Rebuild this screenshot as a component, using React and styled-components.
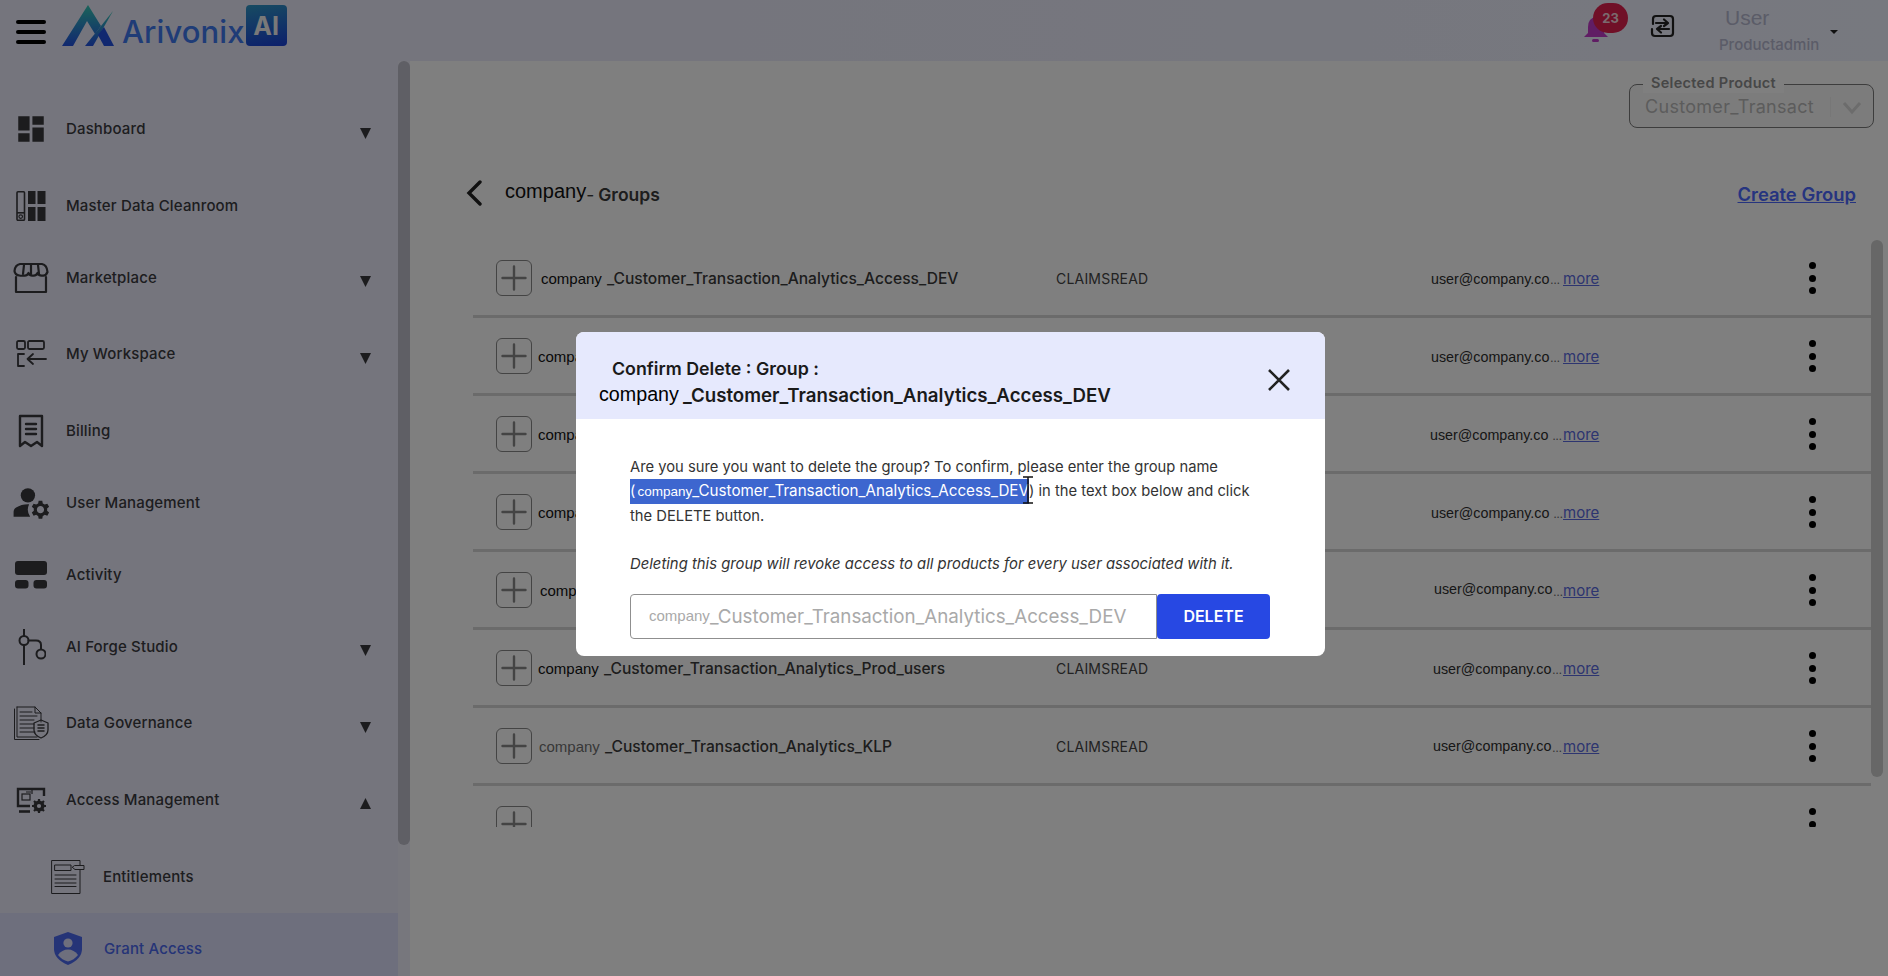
import React from 'react';
import styled, { createGlobalStyle } from 'styled-components';
import { MdDashboard, MdManageAccounts } from 'react-icons/md';

const GlobalStyle = createGlobalStyle`
  html, body { margin: 0; padding: 0; height: 100%; overflow: hidden; }
  body { font-family: "Inter", "Liberation Sans", sans-serif; background: #fff; }
  * { box-sizing: border-box; }
`;

const Page = styled.div`
  width: 1888px;
  height: 976px;
  display: flex;
  flex-direction: column;
  position: relative;
  overflow: hidden;
`;

/* header */
const Header = styled.header`
  height: 61px;
  flex: none;
  display: flex;
  align-items: flex-start;
  background: linear-gradient(90deg, #eaeafa 0%, #eaeafa 30%, #eff2ff 100%);
`;
const Burger = styled.div`
  width: 30px;
  margin: 20px 0 0 16px;
  display: flex;
  flex-direction: column;
  gap: 6.5px;
  span { display: block; height: 3.5px; border-radius: 2px; background: #000; }
`;
const LogoWrap = styled.div`
  display: flex;
  align-items: flex-start;
  margin: 5px 0 0 16px;
`;
const LogoWord = styled.span`
  font-size: 31px;
  font-weight: 500;
  line-height: 40px;
  margin: 7px 1px 0 6px;
  color: #3f78ee;
  letter-spacing: 0.1px;
`;
const LogoBadge = styled.span`
  width: 41px;
  height: 41px;
  border-radius: 4px;
  background: linear-gradient(170deg, #2f97c4 0%, #1a3fd8 100%);
  color: #f2f2f2;
  font-size: 25px;
  font-weight: 700;
  display: flex;
  align-items: center;
  justify-content: center;
`;
const HeaderRight = styled.div`
  margin-left: auto;
  display: flex;
  align-items: flex-start;
`;
const BellWrap = styled.div`
  position: relative;
  width: 60px;
  height: 61px;
  margin-right: 3px;
`;
const BellIcon = styled.svg`
  margin: 15px 0 0 -2px;
  width: 24px;
  height: 28px;
  fill: #c03ac8;
`;
const Badge = styled.span`
  position: absolute;
  left: 7px;
  top: 3px;
  width: 35px;
  height: 30px;
  border-radius: 15px;
  background: #e0204f;
  color: #f5d5dc;
  font-size: 13px;
  font-weight: 700;
  display: flex;
  align-items: center;
  justify-content: center;
`;
const SwapIcon = styled.svg`
  margin-top: 14px;
  width: 26px;
  height: 26px;
`;
const UserBox = styled.div`
  width: 104px;
  margin-left: 44px;
  color: #b6b8d0;
`;
const UserName = styled.div`
  font-family: "Liberation Sans", sans-serif;
  font-size: 21px;
  line-height: 24px;
  margin: 6px 0 0 6px;
`;
const UserRole = styled.div`
  font-size: 15px;
  font-weight: 500;
  line-height: 20px;
  margin-top: 5px;
`;
const Caret = styled.span`
  width: 0;
  height: 0;
  margin: 30px 50px 0 7px;
  border-left: 4px solid transparent;
  border-right: 4px solid transparent;
  border-top: 4px solid #222;
`;

/* layout */
const Body = styled.div`
  flex: 1;
  display: flex;
  min-height: 0;
`;
const Sidebar = styled.aside`
  width: 410px;
  flex: none;
  display: flex;
  background: #eeeefa;
`;
const Nav = styled.nav`
  width: 398px;
  padding-top: 32px;
  background: #eaeafa;
  overflow: hidden;
`;
const SideTrack = styled.div`
  width: 12px;
  background: #eeeefa;
`;
const Thumb = styled.div`
  width: 12px;
  height: ${(p) => p.$h}px;
  margin-top: ${(p) => p.$top || 0}px;
  border-radius: 6px;
  background: ${(p) => p.$color};
`;
const NavItem = styled.div`
  height: ${(p) => (p.$arrow ? 76.6 : 72)}px;
`;
const NavRow = styled.div`
  height: 72px;
  display: flex;
  align-items: center;
  padding-left: ${(p) => (p.$sub ? 37 : 0)}px;
  background: ${(p) => (p.$active ? '#dcdefa' : 'transparent')};
`;
const IconBox = styled.span`
  width: 62px;
  flex: none;
  display: flex;
  align-items: center;
  justify-content: center;
  color: #38383c;
`;
const NavLabel = styled.span`
  margin-left: ${(p) => (p.$sub ? (p.$active ? 5 : 4) : 4)}px;
  margin-top: -1px;
  font-size: 15px;
  font-weight: 500;
  letter-spacing: 0.15px;
  color: ${(p) => (p.$active ? '#4a68ee' : '#3b3b40')};
`;
const Arrow = styled.svg`
  margin-left: auto;
  margin-right: 27px;
  margin-top: 8px;
  width: 11px;
  height: 11px;
  fill: #38383c;
`;

/* main */
const Main = styled.main`
  flex: 1;
  min-width: 0;
  background: #fff;
  padding-top: 23px;
`;
const SelectRow = styled.div`
  display: flex;
  justify-content: flex-end;
  padding-right: 14px;
`;
const SelectField = styled.div`
  position: relative;
  width: 245px;
  height: 44px;
  border: 1px solid #7a7a7a;
  border-radius: 8px;
  display: flex;
  align-items: center;
  padding-left: 15px;
  background: #f8f8f8;
  color: #b8b8b8;
  font-size: 18px;
  letter-spacing: 0.3px;
`;
const Legend = styled.span`
  position: absolute;
  left: 13px;
  top: -12px;
  padding: 0 8px;
  background: #fff;
  color: #8e8e8e;
  font-size: 14.5px;
  line-height: 20px;
  font-weight: 600;
  letter-spacing: 0.3px;
`;
const SelectDivider = styled.span`
  position: absolute;
  right: 42px;
  top: 12px;
  width: 1px;
  height: 20px;
  background: #efefef;
`;
const SelectChevron = styled.svg`
  position: absolute;
  right: 11px;
  top: 15px;
  width: 20px;
  height: 16px;
`;
const TitleRow = styled.div`
  height: 48px;
  margin-top: 41px;
  display: flex;
  align-items: center;
  padding: 0 32px 0 56px;
`;
const BackIcon = styled.svg`
  width: 17px;
  height: 26px;
`;
const TitleText = styled.div`
  margin-left: 22px;
  margin-top: 2px;
  display: flex;
  align-items: baseline;
  font-size: 17.5px;
  font-weight: 600;
  color: #3a3a3a;
`;
const TitleDash = styled.span`
  font-weight: 400;
  margin-right: 4px;
`;
const Redacted = styled.span`
  font-family: "Liberation Sans", sans-serif;
  font-weight: 400;
  font-size: ${(p) => p.$size || 15}px;
  color: ${(p) => p.$color || '#111'};
  margin-right: ${(p) => p.$gap || 0}px;
  position: relative;
  top: ${(p) => p.$lift || 0}px;
`;
const CreateLink = styled.a`
  margin-left: auto;
  margin-top: 2px;
  color: #4c68ff;
  font-size: 18.4px;
  font-weight: 600;
  text-decoration: underline;
`;
const ListWrap = styled.div`
  margin: 23px 5px 0 63px;
  display: flex;
  align-items: flex-start;
`;
const List = styled.div`
  width: 1398px;
  height: 587px;
  overflow: hidden;
`;
const Row = styled.div`
  height: 78px;
  border-bottom: 3px solid #d6d6d6;
  display: grid;
  grid-template-columns: 45px 515px 375px 378px 40px;
  align-items: center;
  padding-left: 23px;
  padding-top: 1px;
`;
const PlusBox = styled.span`
  width: 36px;
  height: 36px;
  border: 1px solid #888;
  border-radius: 6px;
  display: flex;
  align-items: center;
  justify-content: center;
`;
const NameCell = styled.div`
  margin-left: ${(p) => p.$shift || 0}px;
  font-size: 15.6px;
  font-weight: 500;
  color: #3a3a3a;
  white-space: nowrap;
`;
const ClaimCell = styled.div`
  font-size: 14px;
  letter-spacing: 0.2px;
  color: #444;
`;
const EmailCell = styled.div`
  display: grid;
  grid-template-columns: 132px auto;
  align-items: baseline;
  white-space: nowrap;
`;
const EmailText = styled.span`
  font-family: "Liberation Sans", sans-serif;
  font-size: 14.3px;
  color: #2e2e2e;
  margin-left: ${(p) => p.$shift || 0}px;
  position: relative;
  top: ${(p) => p.$lift || 0}px;
`;
const Dots = styled.span`
  font-size: 11px;
  color: #666;
  margin-left: 1px;
`;
const More = styled.a`
  font-size: 15px;
  color: #5a6ae0;
  text-decoration: underline;
`;
const Kebab = styled.div`
  display: flex;
  flex-direction: column;
  gap: 5.5px;
  width: 7px;
  span { width: 7px; height: 7px; border-radius: 50%; background: #000; }
`;
const MainTrack = styled.div`
  width: 12px;
`;

/* modal */
const Scrim = styled.div`
  position: absolute;
  inset: 0;
  background: rgba(0, 0, 0, 0.5);
  display: flex;
  align-items: flex-start;
  justify-content: flex-start;
  padding: 332px 0 0 576px;
`;
const Modal = styled.div`
  width: 749px;
  height: 324px;
  background: #fff;
  border-radius: 8px;
  overflow: hidden;
`;
const ModalHead = styled.div`
  height: 87px;
  background: #e6e9fd;
  display: flex;
  align-items: center;
  justify-content: space-between;
  padding: 12px 34px 0 23px;
`;
const ModalTitle = styled.div`
  font-size: 17.8px;
  font-weight: 600;
  line-height: 27px;
  color: #1a1a1a;
`;
const TitleFirst = styled.div`
  margin-left: 13px;
`;
const TitleSecond = styled.div`
  font-size: 18.7px;
  white-space: nowrap;
`;
const CloseIcon = styled.svg`
  width: 24px;
  height: 24px;
  margin-top: -4px;
`;
const ModalBody = styled.div`
  padding: 36px 55px 0 54px;
`;
const Message = styled.p`
  margin: 0;
  font-size: 14.75px;
  line-height: 24px;
  color: #333;
`;
const Warning = styled(Message)`
  margin-top: 24px;
  font-size: 14.85px;
  font-style: italic;
`;
const Selected = styled.span`
  position: relative;
  display: inline-block;
  background: #3d66cf;
  color: #fff;
  white-space: nowrap;
`;
const SelectedName = styled.span`
  font-size: 15.2px;
  margin-left: 2px;
`;
const IBeam = styled.svg`
  position: absolute;
  right: -5px;
  top: -3px;
  width: 12px;
  height: 28px;
`;
const ConfirmRow = styled.div`
  display: flex;
  margin-top: 18px;
`;
const FakeInput = styled.div`
  width: 527px;
  height: 45px;
  border: 1px solid #8f8f8f;
  border-radius: 4px 0 0 4px;
  display: flex;
  align-items: center;
  padding: 0 0 1px 18px;
  white-space: nowrap;
  font-size: 18.8px;
  color: #a9a9a9;
`;
const DeleteButton = styled.button`
  width: 113px;
  height: 45px;
  border: none;
  border-radius: 4px;
  background: #2748e3;
  color: #fff;
  font-family: inherit;
  font-size: 16px;
  font-weight: 600;
  padding-bottom: 3px;
`;

/* icons */
const LogoMark = () => (
  <svg width="54" height="42" viewBox="0 0 54 42">
    <defs>
      <linearGradient id="logoG" x1="0" y1="0" x2="0" y2="1">
        <stop offset="0" stopColor="#35c8b4" />
        <stop offset="1" stopColor="#2250e0" />
      </linearGradient>
    </defs>
    <path d="M0 41 L26 0 L39 21 L33 29 L25 16 L11 41 Z" fill="url(#logoG)" />
    <path d="M23 41 L51 6 L31 41 Z" fill="url(#logoG)" />
    <path d="M36 30 L42 22 L52 41 L42 41 Z" fill="#2250e0" />
  </svg>
);

const Stroke = ({ w = 30, h = 30, vb = '0 0 30 30', sw = 1.8, children }) => (
  <svg width={w} height={h} viewBox={vb} fill="none" stroke="currentColor" strokeWidth={sw} strokeLinecap="round" strokeLinejoin="round">
    {children}
  </svg>
);

const MasterIcon = () => (
  <svg width="30" height="30" viewBox="0 0 30 30" fill="currentColor">
    <rect x="1" y="0.8" width="7.5" height="28.5" rx="1" fill="none" stroke="currentColor" strokeWidth="1.6" />
    <rect x="1" y="21" width="7.5" height="1.6" />
    <circle cx="4.7" cy="25.6" r="1.8" fill="none" stroke="currentColor" strokeWidth="1.2" />
    <rect x="12" y="0" width="7.5" height="13" />
    <rect x="21.5" y="0" width="8" height="13" />
    <rect x="12" y="16" width="7.5" height="14" />
    <rect x="21.5" y="16" width="8" height="14" />
  </svg>
);

const StoreIcon = () => (
  <Stroke w={36} h={32} vb="0 0 36 32" sw={2.2}>
    <path d="M3 15 V30 H33 V15" />
    <path d="M7 2 H29 Q34 3 34.5 10 Q33 14 29.5 13.5 Q26 14 24.5 11 Q23 14 20 13.5 Q17 14 15.5 11 Q14 14 11 13.5 Q8 14 6.5 13.5 Q2 13 1.5 9 Q2 3 7 2 Z" />
    <path d="M11 3 L10 12 M18 3 V12 M25 3 L26 12" />
  </Stroke>
);

const WorkspaceIcon = () => (
  <Stroke w={32} h={28} vb="0 0 32 28" sw={1.8}>
    <rect x="2" y="1" width="8" height="8" rx="1.5" />
    <rect x="13" y="1" width="16" height="8" rx="1.5" />
    <path d="M9 14 H3 V26 H9" />
    <path d="M31 19 H13 M18 14 L12.5 19 L18 24" />
  </Stroke>
);

const BillingIcon = () => (
  <Stroke w={26} h={34} vb="0 0 26 34" sw={2.4}>
    <path d="M2 2 H24 V32 L19 28 L13 32 L7 28 L2 32 Z" />
    <path d="M8 10 H18 M8 15 H18 M8 20 H18" />
  </Stroke>
);

const ActivityIcon = () => (
  <svg width="32" height="28" viewBox="0 0 32 28" fill="currentColor">
    <rect x="0" y="0" width="32" height="14" rx="3" />
    <rect x="0" y="19" width="13.5" height="8.5" rx="3" />
    <rect x="18.5" y="19" width="13.5" height="8.5" rx="3" />
  </svg>
);

const ForgeIcon = () => (
  <Stroke w={30} h={36} vb="0 0 30 36" sw={2}>
    <path d="M8 0 V7 M8 16 V36" />
    <circle cx="8" cy="11.5" r="4.5" />
    <path d="M12.5 11.5 H20 Q25 11.5 25 16 V20" />
    <circle cx="25" cy="25" r="4.5" />
  </Stroke>
);

const GovernanceIcon = () => (
  <Stroke w={36} h={36} vb="0 0 36 36" sw={1}>
    <path d="M4 2 H22 L28 8 V17 M4 2 V32 H24" />
    <path d="M1.5 4 V34.5 H26" />
    <path d="M22 2 V8 H28" />
    <path d="M7 7 H19 M7 11 H24 M7 15 H21 M7 19 H21 M7 23 H21 M7 27 H22" />
    <path d="M28 15 L35 18 V25 Q35 30 28 33 Q21 30 21 25 V18 Z" strokeWidth="1.3" />
    <path d="M25 20 H31 M25 23 H31 M25 26 H31" strokeWidth="1.5" />
  </Stroke>
);

const AccessIcon = () => (
  <svg width="30" height="26" viewBox="0 0 30 26" fill="none" stroke="currentColor">
    <path d="M28 9 V2 H2 V19 H14" strokeWidth="2.4" />
    <rect x="6" y="7" width="8" height="6" strokeWidth="1.2" />
    <path d="M10 5 H15 M16 3 V7" strokeWidth="1.2" />
    <path d="M3 24.5 H14" strokeWidth="2.6" />
    <circle cx="23" cy="19" r="3.8" strokeWidth="3.4" />
    <path d="M23 12 V14 M23 24 V26 M16 19 H18 M28 19 H30 M18 14 L19.5 15.5 M28 14 L26.5 15.5 M18 24 L19.5 22.5 M28 24 L26.5 22.5" strokeWidth="2.2" />
  </svg>
);

const EntitlementsIcon = () => (
  <Stroke w={34} h={34} vb="0 0 34 34" sw={1}>
    <path d="M1 0.5 H29 V33.5 H1 Z" />
    <rect x="4" y="5" width="16" height="5.5" />
    <path d="M24 5.5 H33 V9.5 H24 L21.5 7.5 Z" fill="#eaeafa" />
    <path d="M4 15 H25 M4 19 H25 M4 23 H25 M4 26.5 H25" />
  </Stroke>
);

const GrantIcon = () => (
  <svg width="28" height="33" viewBox="0 0 28 33">
    <path d="M14 0 L28 5 V17 Q28 27 14 33 Q0 27 0 17 V5 Z" fill="#4a68ee" />
    <circle cx="14" cy="11" r="4.6" fill="#dcdefa" />
    <path d="M4 23 Q8 17.5 14 17.5 Q20 17.5 24 23 Q20 28 14 29.5 Q8 28 4 23 Z" fill="#dcdefa" />
  </svg>
);

const PlusIcon = () => (
  <svg width="26" height="26" viewBox="0 0 26 26" stroke="#888" strokeWidth="2.4" strokeLinecap="round">
    <path d="M13 1.5 V24.5 M1.5 13 H24.5" />
  </svg>
);

const navItems = [
  { label: 'Dashboard', icon: <MdDashboard size={34} />, arrow: 'down' },
  { label: 'Master Data Cleanroom', icon: <MasterIcon /> },
  { label: 'Marketplace', icon: <StoreIcon />, arrow: 'down' },
  { label: 'My Workspace', icon: <WorkspaceIcon />, arrow: 'down' },
  { label: 'Billing', icon: <BillingIcon /> },
  { label: 'User Management', icon: <MdManageAccounts size={43} /> },
  { label: 'Activity', icon: <ActivityIcon /> },
  { label: 'AI Forge Studio', icon: <ForgeIcon />, arrow: 'down' },
  { label: 'Data Governance', icon: <GovernanceIcon />, arrow: 'down' },
  { label: 'Access Management', icon: <AccessIcon />, arrow: 'up' },
  { label: 'Entitlements', icon: <EntitlementsIcon />, sub: true },
  { label: 'Grant Access', icon: <GrantIcon />, sub: true, active: true },
];

const groups = [
  { name: '_Customer_Transaction_Analytics_Access_DEV', shift: 0, emailShift: 0 },
  { name: '_Customer_Transaction_Analytics_Access_QA', shift: -3, emailShift: 0 },
  { name: '_Customer_Transaction_Analytics_Access_UAT', shift: -3, emailShift: -1, gap: true },
  { name: '_Customer_Transaction_Analytics_Users_DEV', shift: -3, emailShift: 0, gap: true },
  { name: '_Customer_Transaction_Analytics_Users_QA', shift: -1, emailShift: 3, lift: -2 },
  { name: '_Customer_Transaction_Analytics_Prod_users', shift: -3, emailShift: 2 },
  { name: '_Customer_Transaction_Analytics_KLP', shift: -2, emailShift: 2, tint: '#707070', lift: -1 },
];

const GroupRow = ({ group }) => (
  <Row>
    <PlusBox><PlusIcon /></PlusBox>
    <NameCell $shift={group.shift}>
      <Redacted $color={group.tint} $gap={5}>company</Redacted>{group.name}
    </NameCell>
    <ClaimCell>CLAIMSREAD</ClaimCell>
    <EmailCell>
      <span>
        <EmailText $shift={group.emailShift} $lift={group.lift}>user@company.co</EmailText>
        <Dots>{group.gap ? '\u00a0' : ''}...</Dots>
      </span>
      <More>more</More>
    </EmailCell>
    <Kebab><span /><span /><span /></Kebab>
  </Row>
);

export default function App() {
  return (
    <>
      <GlobalStyle />
      <Page>
        <Header>
          <Burger><span /><span /><span /></Burger>
          <LogoWrap>
            <LogoMark />
            <LogoWord>Arivonix</LogoWord>
            <LogoBadge>AI</LogoBadge>
          </LogoWrap>
          <HeaderRight>
            <BellWrap>
              <BellIcon viewBox="0 0 24 28">
                <path d="M12 2 Q20 3 20 12 V18 L24 22 H0 L4 18 V12 Q4 3 12 2 Z" />
                <rect x="8" y="24" width="7" height="3" rx="1.5" />
              </BellIcon>
              <Badge>23</Badge>
            </BellWrap>
            <SwapIcon viewBox="0 0 26 26" fill="none" stroke="#222" strokeWidth="2.2" strokeLinejoin="round" strokeLinecap="round">
              <path d="M4 10 V5 Q4 2 7 2 H21 Q24 2 24 5 V19 Q24 22 21 22 H6 Q3 22 3 19 V15" />
              <path d="M7 9 H19 M15 5.5 L19 9 L15 12 M20 15 H8 M12 12 L8 15 L12 18.5" />
            </SwapIcon>
            <UserBox>
              <UserName>User</UserName>
              <UserRole>Productadmin</UserRole>
            </UserBox>
            <Caret />
          </HeaderRight>
        </Header>
        <Body>
          <Sidebar>
            <Nav>
              {navItems.map((item) => (
                <NavItem key={item.label} $arrow={!!item.arrow}>
                  <NavRow $sub={item.sub} $active={item.active}>
                    <IconBox>{item.icon}</IconBox>
                    <NavLabel $sub={item.sub} $active={item.active}>{item.label}</NavLabel>
                    {item.arrow && (
                      <Arrow viewBox="0 0 11 11">
                        <path d={item.arrow === 'down' ? 'M0 0 H11 L5.5 11 Z' : 'M0 11 H11 L5.5 0 Z'} />
                      </Arrow>
                    )}
                  </NavRow>
                </NavItem>
              ))}
            </Nav>
            <SideTrack><Thumb $h={784} $color="#bebeca" /></SideTrack>
          </Sidebar>
          <Main>
            <SelectRow>
              <SelectField>
                <Legend>Selected Product</Legend>
                Customer_Transact
                <SelectDivider />
                <SelectChevron viewBox="0 0 20 16" fill="none" stroke="#d8d8d8" strokeWidth="3">
                  <path d="M2 3 L10 12 L18 3" />
                </SelectChevron>
              </SelectField>
            </SelectRow>
            <TitleRow>
              <BackIcon viewBox="0 0 17 26" fill="none" stroke="#222" strokeWidth="3.4" strokeLinecap="round">
                <path d="M14 2 L3 13 L14 24" />
              </BackIcon>
              <TitleText>
                <Redacted $size={20} $lift={-3}>company</Redacted>
                <TitleDash>-</TitleDash>Groups
              </TitleText>
              <CreateLink>Create Group</CreateLink>
            </TitleRow>
            <ListWrap>
              <List>
                {groups.map((g) => <GroupRow key={g.name} group={g} />)}
                <Row>
                  <PlusBox><PlusIcon /></PlusBox>
                  <span />
                  <span />
                  <span />
                  <Kebab><span /><span /><span /></Kebab>
                </Row>
              </List>
              <MainTrack><Thumb $h={537} $color="#cecece" /></MainTrack>
            </ListWrap>
          </Main>
        </Body>
        <Scrim>
          <Modal>
            <ModalHead>
              <ModalTitle>
                <TitleFirst>Confirm Delete : Group :</TitleFirst>
                <TitleSecond><Redacted $size={19.7} $color="#000" $gap={4} $lift={-1}>company</Redacted>_Customer_Transaction_Analytics_Access_DEV</TitleSecond>
              </ModalTitle>
              <CloseIcon viewBox="0 0 24 24" fill="none" stroke="#222" strokeWidth="2.6">
                <path d="M2 2 L22 22 M22 2 L2 22" />
              </CloseIcon>
            </ModalHead>
            <ModalBody>
              <Message>
                Are you sure you want to delete the group? To confirm, please enter the group name{' '}
                <Selected>
                  (<SelectedName><Redacted $size={13.5} $color="#fff">company</Redacted>_Customer_Transaction_Analytics_Access_DEV</SelectedName>
                  <IBeam viewBox="0 0 12 28" fill="none" stroke="#111" strokeWidth="1.5">
                    <path d="M1 1 H11 M6 1 V27 M1 27 H11" />
                  </IBeam>
                </Selected>
                ) in the text box below and click the DELETE button.
              </Message>
              <Warning>Deleting this group will revoke access to all products for every user associated with it.</Warning>
              <ConfirmRow>
                <FakeInput>
                  <Redacted $size={15} $color="#a9a9a9" $lift={-1}>company</Redacted>_Customer_Transaction_Analytics_Access_DEV
                </FakeInput>
                <DeleteButton>DELETE</DeleteButton>
              </ConfirmRow>
            </ModalBody>
          </Modal>
        </Scrim>
      </Page>
    </>
  );
}
